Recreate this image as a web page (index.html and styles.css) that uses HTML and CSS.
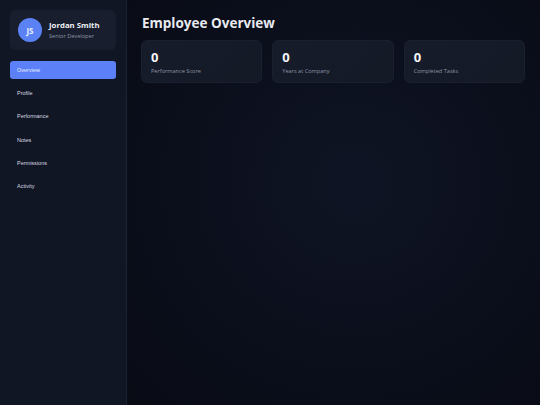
FILE: index.html
```html
<!DOCTYPE html>
<html lang="en">
<head>
  <meta charset="UTF-8">
  <meta name="viewport" content="width=device-width, initial-scale=1.0">
  <title>Employee Overview</title>
  <link rel="stylesheet" href="styles.css">
</head>
<body>
  <div class="layout">
    <aside class="sidebar">
      <div class="profile-card">
        <div class="avatar">JS</div>
        <div class="profile-info">
          <div class="profile-name">Jordan Smith</div>
          <div class="profile-role">Senior Developer</div>
        </div>
      </div>

      <nav class="nav">
        <a class="nav-item active" href="#">Overview</a>
        <a class="nav-item" href="#">Profile</a>
        <a class="nav-item" href="#">Performance</a>
        <a class="nav-item" href="#">Notes</a>
        <a class="nav-item" href="#">Permissions</a>
        <a class="nav-item" href="#">Activity</a>
      </nav>
    </aside>

    <main class="main">
      <h1 class="page-title">Employee Overview</h1>
      <div class="stats">
        <div class="stat-card">
          <div class="stat-value">0</div>
          <div class="stat-label">Performance Score</div>
        </div>
        <div class="stat-card">
          <div class="stat-value">0</div>
          <div class="stat-label">Years at Company</div>
        </div>
        <div class="stat-card">
          <div class="stat-value">0</div>
          <div class="stat-label">Completed Tasks</div>
        </div>
      </div>
    </main>
  </div>
</body>
</html>
```

FILE: styles.css
```css
body {
  margin: 0;
  font-family: 'Open Sans', sans-serif;
  background: #0a0e1a;
  color: #e5e7eb;
}

.layout {
  display: flex;
  height: 405px;
}

.sidebar {
  width: 127px;
  flex-shrink: 0;
  box-sizing: border-box;
  padding: 10px;
  background: #111625;
  border-right: 1px solid #1d2333;
}

.profile-card {
  display: flex;
  align-items: center;
  gap: 7px;
  padding: 8px;
  border-radius: 6px;
  background: #181e2d;
}

.avatar {
  width: 24px;
  height: 24px;
  border-radius: 50%;
  background: #5b82f5;
  color: #e8eeff;
  display: flex;
  align-items: center;
  justify-content: center;
  font-size: 8px;
  font-weight: 700;
}

.profile-name {
  font-size: 7.8px;
  font-weight: 700;
  color: #eef0f5;
}

.profile-role {
  margin-top: 2px;
  font-size: 5.6px;
  color: #8f96a6;
}

.nav {
  display: flex;
  flex-direction: column;
  gap: 5.2px;
  margin-top: 11px;
}

.nav-item {
  display: block;
  height: 18px;
  line-height: 18px;
  padding: 0 7px;
  border-radius: 3px;
  font-family: 'Liberation Sans', Arial, sans-serif;
  font-size: 5.5px;
  color: #d6d9e0;
  text-decoration: none;
}

.nav-item.active {
  background: #5b80f8;
  color: #e9eeff;
}

.main {
  flex: 1;
  padding: 14px 15px 14px 14px;
  background: radial-gradient(ellipse at 55% 45%, #0f1424 0%, #0b0f1c 55%, #080b14 100%);
}

.page-title {
  margin: 0 0 8px 1px;
  font-size: 13.5px;
  font-weight: 700;
  line-height: 18px;
  color: #e8eaf0;
}

.stats {
  display: grid;
  grid-template-columns: repeat(3, 1fr);
  gap: 10px;
}

.stat-card {
  height: 43px;
  box-sizing: border-box;
  padding: 9px 9px;
  border-radius: 6px;
  background: linear-gradient(135deg, #171c2b, #141926);
  border: 1px solid #1a2030;
}

.stat-value {
  font-size: 13px;
  font-weight: 700;
  line-height: 15px;
  color: #f3f4f7;
}

.stat-label {
  margin-top: 2px;
  font-size: 5.6px;
  color: #8d93a2;
}
```
